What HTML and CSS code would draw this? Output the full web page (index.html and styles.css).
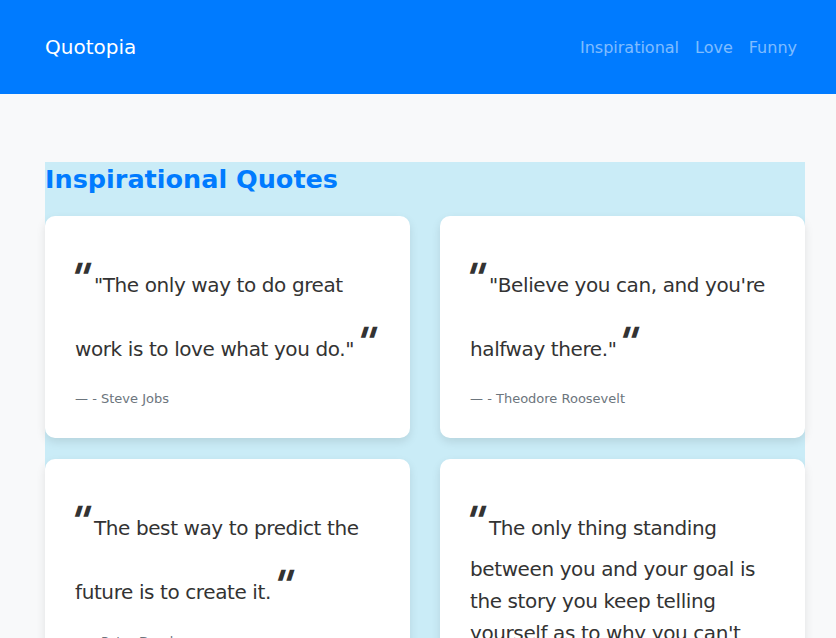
FILE: index.html
```html
<!DOCTYPE html>
<html lang="en">
<head>
<meta charset="utf-8">
<title>Quotopia</title>
<link rel="stylesheet" href="styles.css">
</head>
<body>
<header class="site-header">
  <div class="brand">Quotopia</div>
  <nav class="nav">
    <a class="nav-link" href="#">Inspirational</a>
    <a class="nav-link" href="#">Love</a>
    <a class="nav-link" href="#">Funny</a>
  </nav>
</header>
<main class="main">
  <section class="category">
    <h2 class="category-title">Inspirational Quotes</h2>
    <div class="quote-grid">
      <article class="quote-card">
        <blockquote class="quote-text"> "The only way to do great work is to love what you do."</blockquote>
        <p class="quote-author">- Steve Jobs</p>
      </article>
      <article class="quote-card">
        <blockquote class="quote-text"> "Believe you can, and you're halfway there."</blockquote>
        <p class="quote-author">- Theodore Roosevelt</p>
      </article>
      <article class="quote-card">
        <blockquote class="quote-text"> The best way to predict the future is to create it.</blockquote>
        <p class="quote-author">- Peter Drucker</p>
      </article>
      <article class="quote-card">
        <blockquote class="quote-text"> The only thing standing between you and your goal is the story you keep telling yourself as to why you can't achieve it.</blockquote>
        <p class="quote-author">- Jordan Belfort</p>
      </article>
    </div>
  </section>
</main>
</body>
</html>
```

FILE: styles.css
```css
* { box-sizing: border-box; }

html, body {
  margin: 0;
  padding: 0;
}

body {
  background: #f8f9fa;
  font-family: "DejaVu Sans", "Noto Sans", sans-serif;
  color: #333333;
}

.site-header {
  height: 94px;
  background: #007bff;
  display: flex;
  align-items: center;
  justify-content: space-between;
  padding: 0 31px 0 45px;
}

.brand {
  color: #ffffff;
  font-size: 20px;
}

.nav {
  display: flex;
}

.nav-link {
  color: rgba(255, 255, 255, 0.5);
  text-decoration: none;
  font-size: 16px;
  padding: 0 8px;
}

.main {
  padding: 68px 0 40px 45px;
}

.category {
  width: 760px;
  background: #caecf7;
}

.category-title {
  margin: 0 0 20px;
  font-size: 25.5px;
  line-height: 34px;
  font-weight: 700;
  color: #007bff;
}

.quote-grid {
  display: grid;
  grid-template-columns: 1fr 1fr;
  column-gap: 30px;
  row-gap: 21px;
}

.quote-card {
  background: #ffffff;
  border-radius: 10px;
  box-shadow: 0 4px 10px rgba(0, 0, 0, 0.1);
  padding: 30px 30px 29px;
}

.quote-text {
  margin: 0;
  font-size: 20px;
  line-height: 1.6;
  letter-spacing: -0.4px;
  color: #333333;
}

.quote-text::before,
.quote-text::after {
  content: '"';
  display: inline-block;
  width: 14px;
  font-size: 40px;
  font-weight: 700;
  letter-spacing: 0;
  color: #333333;
  transform: skewX(-18deg);
  transform-origin: 50% 38%;
}

.quote-text::before {
  margin-left: -3px;
  margin-right: 2px;
}

.quote-text::after {
  margin-left: 4px;
}

.quote-author {
  margin: 14px 0 0;
  font-size: 13px;
  line-height: 21px;
  color: #6c757d;
}

.quote-author::before {
  content: "\2014\00a0";
}
```
